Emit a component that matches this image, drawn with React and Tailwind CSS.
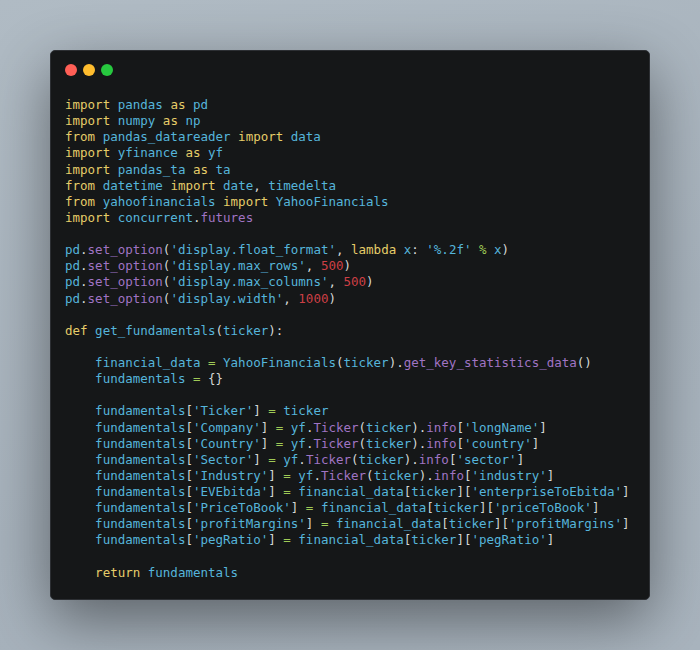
import React from "react";

const K = "text-[#e6cd69]";
const B = "text-[#55b5db]";
const P = "text-[#a074c4]";
const R = "text-[#cd3f45]";
const G = "text-[#9fca56]";
const W = "text-[#d4d7d6]";

const imp = (mod, alias) => [[K, "import"], [W, " "], [B, mod], [W, " "], [K, "as"], [W, " "], [B, alias]];
const opt = (key, val) => [
  [B, "pd"], [W, "."], [P, "set_option"], [W, "("], [B, `'${key}'`], [W, ", "], [R, val], [W, ")"],
];
const fund = (key) => [[W, "    "], [B, "fundamentals"], [W, "["], [B, `'${key}'`], [W, "]"], [W, " "], [G, "="], [W, " "]];
const yfInfo = (key, field) => [
  ...fund(key),
  [B, "yf"], [W, "."], [P, "Ticker"], [W, "("], [B, "ticker"], [W, ")."], [P, "info"], [W, "["], [B, `'${field}'`], [W, "]"],
];
const fin = (key, field) => [
  ...fund(key),
  [B, "financial_data"], [W, "["], [B, "ticker"], [W, "]["], [B, `'${field}'`], [W, "]"],
];

const lines = [
  imp("pandas", "pd"),
  imp("numpy", "np"),
  [[K, "from"], [W, " "], [B, "pandas_datareader"], [W, " "], [K, "import"], [W, " "], [B, "data"]],
  imp("yfinance", "yf"),
  imp("pandas_ta", "ta"),
  [[K, "from"], [W, " "], [B, "datetime"], [W, " "], [K, "import"], [W, " "], [B, "date"], [W, ", "], [B, "timedelta"]],
  [[K, "from"], [W, " "], [B, "yahoofinancials"], [W, " "], [K, "import"], [W, " "], [B, "YahooFinancials"]],
  [[K, "import"], [W, " "], [B, "concurrent"], [W, "."], [P, "futures"]],
  [],
  [
    [B, "pd"], [W, "."], [P, "set_option"], [W, "("], [B, "'display.float_format'"], [W, ", "], [K, "lambda"], [W, " "],
    [B, "x"], [W, ": "], [B, "'%.2f'"], [W, " "], [G, "%"], [W, " "], [B, "x"], [W, ")"],
  ],
  opt("display.max_rows", "500"),
  opt("display.max_columns", "500"),
  opt("display.width", "1000"),
  [],
  [[K, "def"], [W, " "], [B, "get_fundamentals"], [W, "("], [B, "ticker"], [W, "):"]],
  [],
  [
    [W, "    "], [B, "financial_data"], [W, " "], [G, "="], [W, " "], [B, "YahooFinancials"], [W, "("], [B, "ticker"], [W, ")."],
    [P, "get_key_statistics_data"], [W, "()"],
  ],
  [[W, "    "], [B, "fundamentals"], [W, " "], [G, "="], [W, " "], [W, "{}"]],
  [],
  [...fund("Ticker"), [B, "ticker"]],
  yfInfo("Company", "longName"),
  yfInfo("Country", "country"),
  yfInfo("Sector", "sector"),
  yfInfo("Industry", "industry"),
  fin("EVEbitda", "enterpriseToEbitda"),
  fin("PriceToBook", "priceToBook"),
  fin("profitMargins", "profitMargins"),
  fin("pegRatio", "pegRatio"),
  [],
  [[W, "    "], [K, "return"], [W, " "], [B, "fundamentals"]],
];

export default function App() {
  return (
    <div className="w-[700px] h-[650px] bg-[linear-gradient(160deg,#b0bbc4_0%,#a6b1bb_60%,#a9b4be_100%)] pt-[50px] pl-[50px]">
      <div className="w-[600px] h-[550px] rounded-[5px] bg-[#151718] shadow-[0_20px_60px_rgba(0,0,0,0.45)] border border-[#2c2f33] pt-[13px] pl-[14px]">
        <div className="flex gap-[6px]">
          <span className="w-[12px] h-[12px] rounded-full bg-[#ff5f56]" />
          <span className="w-[12px] h-[12px] rounded-full bg-[#ffbd2e]" />
          <span className="w-[12px] h-[12px] rounded-full bg-[#27c93f]" />
        </div>
        <pre className="mt-[21px] font-['DejaVu_Sans_Mono',monospace] text-[12.5px] leading-[16.14px] text-[#d4d7d6] whitespace-pre">
          {lines.map((toks, i) => (
            <div key={i} className="h-[16.14px]">
              {toks.length === 0 ? " " : toks.map(([c, t], j) => (
                <span key={j} className={c}>{t}</span>
              ))}
            </div>
          ))}
        </pre>
      </div>
    </div>
  );
}
